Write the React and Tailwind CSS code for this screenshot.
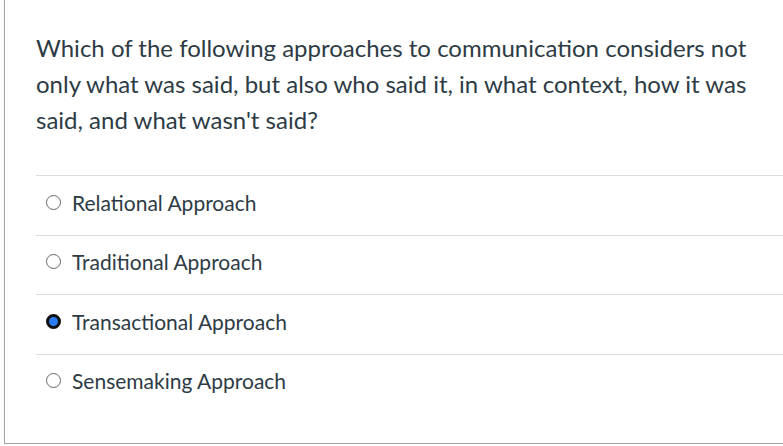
const options = [
  { label: 'Relational Approach', checked: false },
  { label: 'Traditional Approach', checked: false },
  { label: 'Transactional Approach', checked: true },
  { label: 'Sensemaking Approach', checked: false },
];

function Radio({ checked }) {
  if (checked) {
    return (
      <span className="block h-[15px] w-[15px] shrink-0 rounded-full border-[3px] border-[#111] bg-[#2a7cf6]" />
    );
  }
  return <span className="block h-[15px] w-[15px] shrink-0 rounded-full border border-[#666] bg-white" />;
}

export default function App() {
  return (
    <div className="h-[446px] w-[783px] overflow-hidden bg-white font-['Lato',_'Liberation_Sans',_sans-serif] text-[#2d3b45]">
      <div className="ml-[4px] h-[444px] border-b border-l border-[#a3a3a3] pl-[31px] pt-[30px]">
        {/* Question */}
        <p className="pr-[10px] text-[24px] leading-[36px]">
          Which of the following approaches to communication considers not only what was said, but also who said it, in
          what context, how it was said, and what wasn't said?
        </p>

        {/* Answers */}
        <div className="mt-[37px]">
          {options.map((opt) => (
            <div
              key={opt.label}
              className="flex h-[59.5px] items-center gap-[11px] border-t border-[#dcdcdc] pb-[6px] pl-[10px]"
            >
              <Radio checked={opt.checked} />
              <span className="text-[21px] leading-none">{opt.label}</span>
            </div>
          ))}
        </div>
      </div>
    </div>
  );
}
